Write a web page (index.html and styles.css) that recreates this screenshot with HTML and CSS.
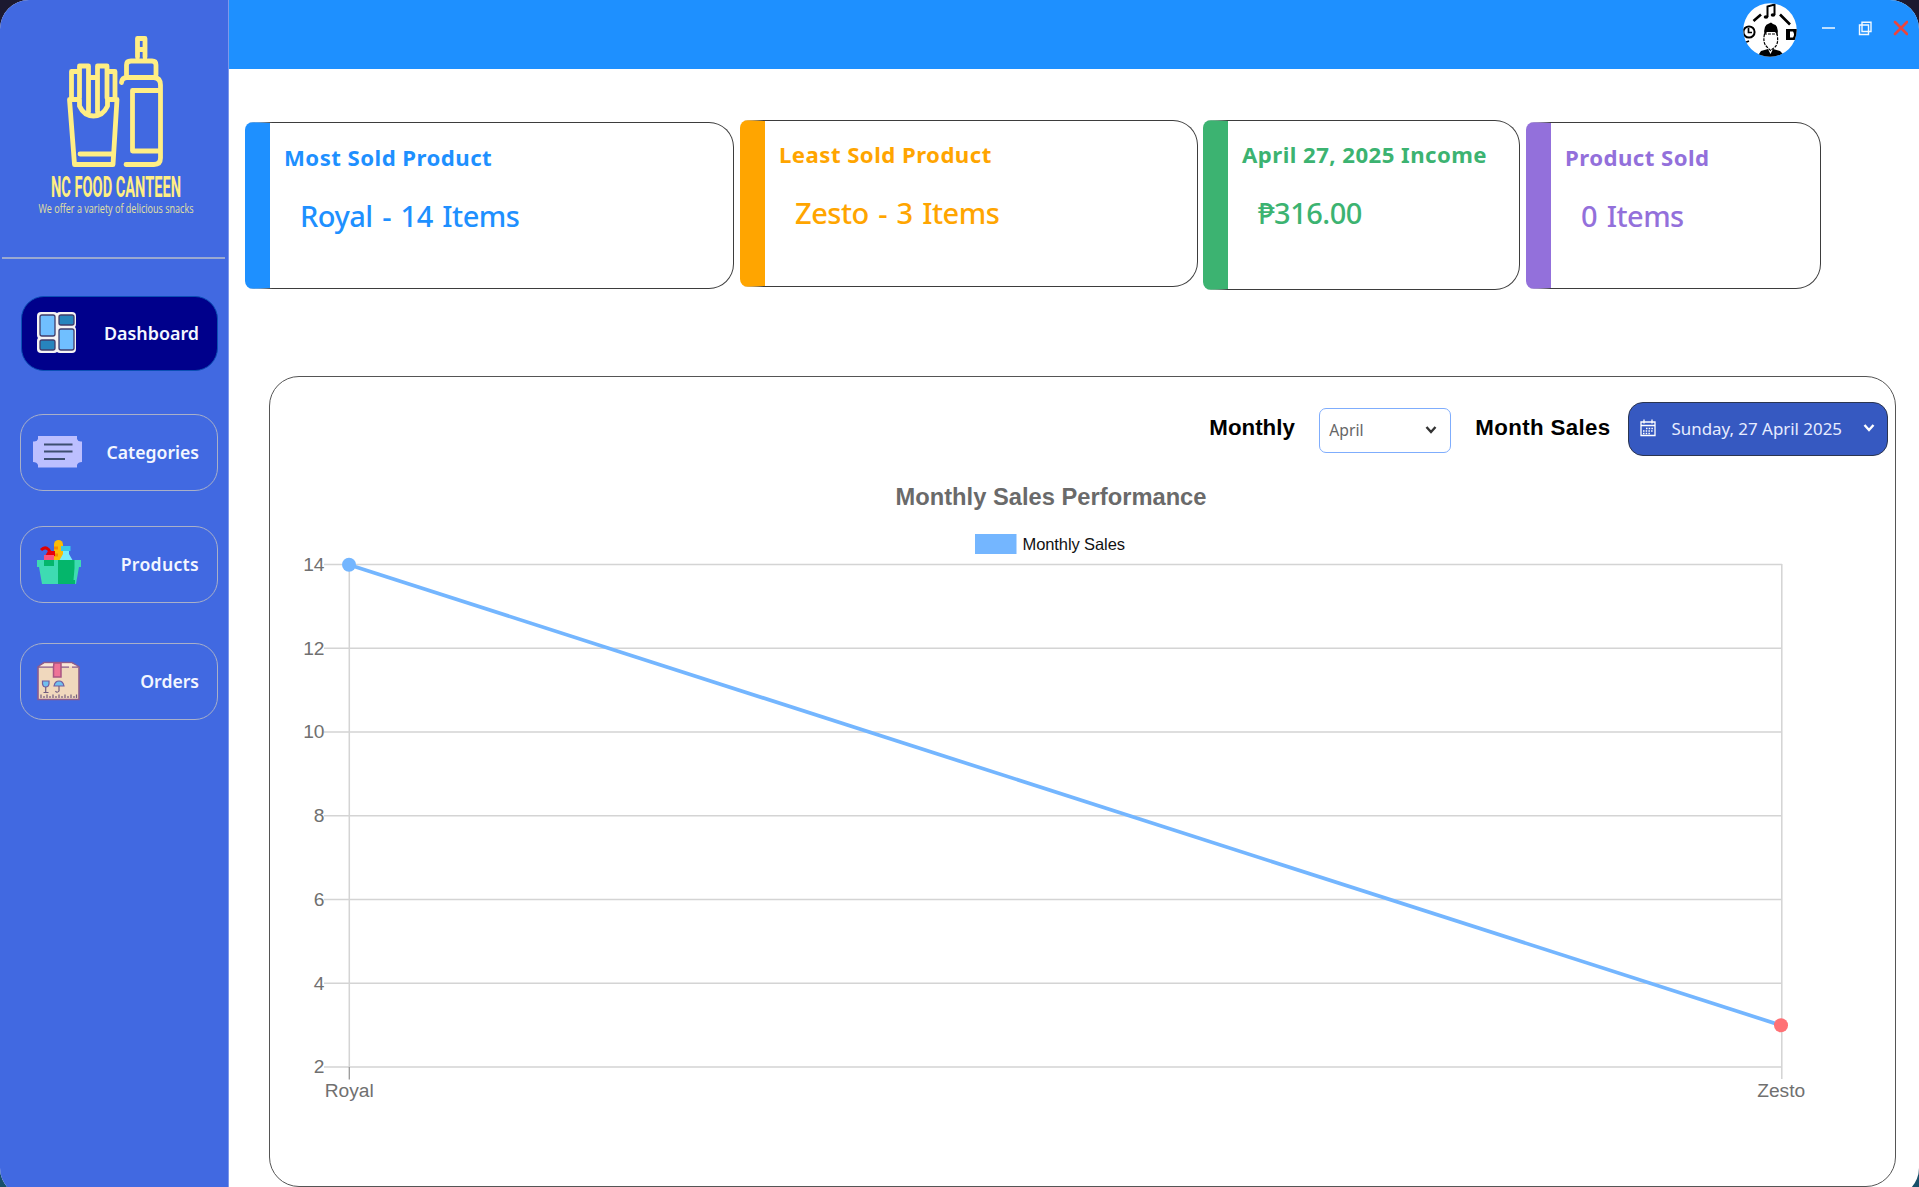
FILE: index.html
```html
<!DOCTYPE html>
<html lang="en">
<head>
<meta charset="utf-8">
<title>NC Food Canteen</title>
<link rel="stylesheet" href="styles.css">
</head>
<body>
<div class="app">
  <aside class="sidebar">
    <svg class="logo" viewBox="0 0 228 257" width="228" height="257" fill="none" stroke="#ffee84" stroke-width="4.8" stroke-linecap="round" stroke-linejoin="round">
      <path d="M69.500 99.500H79.500V106Q84 116 93.500 116Q103 116 107.500 106V99.500H117L113 164.500H74.500ZM71.500 98V71.500H79.500M79.500 98V66H88.500V112M88.500 77.500H97.500M97.500 112V66H107V98M107 71.500H115V98M80 154H111"/>
      <path d="M137.500 57V38.500H145V57M138 49.500H145M126.500 75V65Q126.500 61 131 61H152Q156 61 156 65V75M121.500 82.500Q122 77.500 127 77.500H154Q160.500 78 160.500 85V158Q160.500 164.500 154 164.500H126M160 90.500H132.500V151H160"/>
      <text class="brand" x="51" y="196.500" textLength="130" lengthAdjust="spacingAndGlyphs">NC FOOD CANTEEN</text>
      <text class="tagline" x="38.500" y="213" textLength="155" lengthAdjust="spacingAndGlyphs">We offer a variety of delicious snacks</text>
    </svg>
    <nav class="nav">
      <a class="nav-item active">
        <svg viewBox="0 0 52 42" width="52" height="42"><rect x="3" y="0" width="21" height="27" rx="4" fill="#f4f2f4"/><rect x="22" y="0" width="20" height="16" rx="4" fill="#f4f2f4"/><rect x="3" y="25" width="21" height="16" rx="4" fill="#f4f2f4"/><rect x="22" y="14" width="20" height="27" rx="4" fill="#f4f2f4"/><g stroke="#3f3c6b" stroke-width="1.300"><rect x="6" y="3" width="15" height="21" rx="2" fill="#70bfff"/><rect x="25" y="3" width="15" height="10" rx="2" fill="#2784bd"/><rect x="6" y="28" width="15" height="10" rx="2" fill="#2784bd"/><rect x="25" y="17" width="15" height="21" rx="2" fill="#70bfff"/></g></svg>
        <span>Dashboard</span>
      </a>
      <a class="nav-item">
        <svg viewBox="0 0 52 42" width="52" height="42"><path d="M5 5H44V8Q45 11 49 10.500V31Q45 31 44 34V36.500H5V34Q4 31 0 31V10.500Q4 11 5 8Z" fill="#bcbfff"/><path d="M11 13.500H39.500M11 20.500H39.500M11 28H32" stroke="#3d4e70" stroke-width="2.200"/></svg>
        <span>Categories</span>
      </a>
      <a class="nav-item products">
        <svg viewBox="0 0 52 50" width="52" height="50"><rect x="21" y="3" width="9" height="24" rx="4.500" fill="#fbbb05"/><path d="M21 11H25M21 18H25" stroke="#f58a00" stroke-width="3"/><path d="M8 13Q12 9 15.500 12.500L17 15" fill="none" stroke="#e00000" stroke-width="3"/><path d="M12 19L15 14H22V19Z" fill="#e80008"/><path d="M11 18H21V24H11Z" fill="#fb547c"/><path d="M30 13H36V17L40 24H26L30 17Z" fill="#78eefb"/><path d="M28 9H37.500V14H28Z" fill="#37c9e8"/><path d="M4 23H48V30H46L43 47H9L6 30H4Z" fill="#3edbb2"/><path d="M25 23H41.500V31L40.500 43H42V47H25ZM11 23H21V29H11Z" fill="#04b66b"/></svg>
        <span>Products</span>
      </a>
      <a class="nav-item">
        <svg viewBox="0 0 52 42" width="52" height="42"><path d="M5 7L11 2.500H39L46 7V39.500H5Z" fill="#f0d8bd" stroke="#8b5c8e" stroke-width="1.600"/><path d="M6 6.500L11.500 3.500H38.500L45 6.500Z" fill="#fae6d8"/><path d="M5 7.200H36M39 7.200H45" stroke="#8b5c8e" stroke-width="1.300"/><path d="M21 3H28V17H20.500V7Z" fill="#ee7397" stroke="#a85583" stroke-width="1.500"/><path d="M9.500 21H16V24Q15.500 27 12.700 27Q10 27 9.500 24ZM21 26Q22 21 26 21Q30 21 31 26Z" fill="#70bfef" stroke="#725c9d" stroke-width="1.200"/><path d="M12.700 27V32.500M10.500 32.500H15.500M26 26V31Q24 33.500 22.500 31M8 38V34.500M11 38V36M14 38V34.500M17 38V36M20 38V34.500M23 38V36M26 38V34.500M29 38V36M32 38V34.500M35 38V36M38 38V34.500M41 38V36M43.500 38V34.500" fill="none" stroke="#725c7d" stroke-width="1.200"/></svg>
        <span>Orders</span>
      </a>
    </nav>
  </aside>
  <main class="main">
    <header class="topbar">
      <svg class="avatar" viewBox="0 0 54 54" width="54" height="54">
        <clipPath id="disc"><circle cx="27" cy="27" r="26.700"/></clipPath>
        <g clip-path="url(#disc)"><rect width="54" height="54" fill="#fff"/>
          <path d="M14 54L18 48L25 46L27.500 51L30 46L37 48L43 54Z" fill="#000"/>
          <path d="M21.500 31Q19.500 40 24 44L27.500 47.500L32 44Q36 40 34 31Z" fill="#fff" stroke="#000" stroke-width="1.200" stroke-dasharray="3 1"/>
          <path d="M21.500 32Q20 22 26 20.500L28 19.500L30 21Q36 22 34.500 32L32 29H24Z" fill="#000"/>
          <circle cx="6" cy="29" r="5.600" fill="#fff" stroke="#000" stroke-width="2"/><path d="M5.500 25V29.500H9M1 40L6 38" fill="none" stroke="#000" stroke-width="1.700"/>
          <path d="M10.500 18L18 11.500M37 11.500L47 21.500" stroke="#000" stroke-width="2.600"/>
          <path d="M24.500 14V3.500L31.500 1.500V12" fill="none" stroke="#000" stroke-width="2"/><ellipse cx="23" cy="14" rx="2.300" ry="1.800"/><ellipse cx="30" cy="12" rx="2.300" ry="1.800"/>
          <path d="M43 26H54V37H43Z"/><path d="M47 28.500H50Q52 31.500 50 34.500H47Z" fill="#fff"/>
        </g>
      </svg>
      <svg class="winctl" viewBox="0 0 86 16" width="86" height="16" fill="none" stroke="#f2f9ff" stroke-width="1.400"><path d="M0 8H13M37.500 5V14.500H46.500V5ZM40 11.500V2.300H49V11.500ZM37.500 5H46.500"/><path d="M73 2L85 14M85 2L73 14" stroke="#ec453d" stroke-width="2.600" stroke-linecap="round"/></svg>
    </header>
    <section class="cards">
      <article class="card most"><h2>Most Sold Product</h2><p>Royal - 14 Items</p></article>
      <article class="card least"><h2>Least Sold Product</h2><p>Zesto - 3 Items</p></article>
      <article class="card income"><h2>April 27, 2025 Income</h2><p>₱316.00</p></article>
      <article class="card sold"><h2>Product Sold</h2><p>0 Items</p></article>
    </section>
    <section class="panel">
      <div class="filters">
        <span class="label">Monthly</span>
        <div class="select"><span>April</span><svg viewBox="0 0 12 10" width="12" height="10"><path d="M1.500 2L6 7L10.500 2" fill="none" stroke="#333" stroke-width="2.400"/></svg></div>
        <span class="label sales">Month Sales</span>
        <div class="date">
          <svg viewBox="0 0 16 18" width="16" height="18" fill="none" stroke="#fff" stroke-width="1.300"><path d="M1 3H15V16.500H1ZM1 6.500H15M4 .5V4.500M12 .5V4.500"/><path d="M6 9.500H13M3 12H13M3 14.500H11" stroke-dasharray="1.500 1.200"/></svg>
          <span>Sunday, 27 April 2025</span>
          <svg viewBox="0 0 12 10" width="12" height="10"><path d="M1.500 2L6 7L10.500 2" fill="none" stroke="#fff" stroke-width="2.400"/></svg>
        </div>
      </div>
      <svg class="chart" viewBox="270 460 1625 725" width="1625" height="725">
        <text class="chart-title" x="1051" y="504.500" text-anchor="middle" textLength="311">Monthly Sales Performance</text>
        <rect x="975" y="534" width="41.500" height="20" fill="#74b6ff"/>
        <text class="legend" x="1022.500" y="550" textLength="102.500">Monthly Sales</text>
        <path d="M324 564.500H1782M324 648.300H1782M324 732H1782M324 815.800H1782M324 899.600H1782M324 983.300H1782M324 1067H1782M349.300 564V1067M1781.800 564V1079" stroke="#d4d4d4" stroke-width="1.500"/>
        <path d="M349.300 1067V1079.500" stroke="#999" stroke-width="1.300"/>
        <path d="M349 564.700L1781 1025.300" stroke="#74b6ff" stroke-width="3.700"/>
        <circle cx="349" cy="564.700" r="7" fill="#74b6ff"/><circle cx="1781" cy="1025.300" r="7" fill="#ff7175"/>
        <g class="tick" text-anchor="end"><text x="324.500" y="571">14</text><text x="324.500" y="654.500">12</text><text x="324.500" y="738.300">10</text><text x="324.500" y="822">8</text><text x="324.500" y="905.800">6</text><text x="324.500" y="989.600">4</text><text x="324.500" y="1073.300">2</text></g>
        <g class="tick" text-anchor="middle"><text x="349.200" y="1097">Royal</text><text x="1781.200" y="1097">Zesto</text></g>
      </svg>
    </section>
  </main>
</div>
</body>
</html>
```
FILE: styles.css
```css
* { box-sizing: border-box; }
html, body { height: 1187px; overflow: hidden; }
body {
  margin: 0;
  background: linear-gradient(#1c1930 50%, #17506a 50%);
  font-family: "Noto Sans", sans-serif;
}
.app {
  display: flex;
  width: 1919px;
  height: 1197px;
  border-radius: 29px;
  overflow: hidden;
  background: #fff;
}
.sidebar {
  width: 229px;
  flex: none;
  background: #4169e1;
  border-right: 1px solid #7d98ea;
}
.logo { display: block; overflow: visible; }
.brand { font: 700 29px "Roboto", sans-serif; fill: #ffee84; stroke: none; }
.tagline { font: 500 13px "Open Sans", sans-serif; fill: #e2e0a0; stroke: none; }
.nav {
  margin: 0 3px 0 2px;
  padding: 37px 6px 0 18px;
  border-top: 2px solid #9aa9d0;
}
.nav-item {
  display: flex;
  align-items: center;
  justify-content: space-between;
  width: 198px;
  height: 77px;
  margin-bottom: 35.500px;
  padding: 0 18px 1px 12px;
  border: 1.500px solid #a9b0c8;
  border-radius: 23px;
  color: #f3f6ff;
  font-size: 17.600px;
  font-weight: 600;
}
.nav-item.active {
  width: 197px;
  height: 75px;
  margin: 0 1px 42.500px 1px;
  padding: 0 18px 1px 12px;
  background: #00008b;
  border-color: #0b50b5;
  font-size: 17.900px;
}
.nav-item.products { margin-bottom: 39.500px; letter-spacing: .3px; }
.products svg { margin-top: -5px; }
.main { flex: 1; display: flex; flex-direction: column; }
.topbar {
  display: flex;
  justify-content: flex-end;
  height: 69px;
  padding: 2.500px 11px 0 0;
  background: #1e90ff;
}
.winctl { margin: 17px 0 0 25px; }
.cards {
  display: flex;
  gap: 6px;
  height: 173px;
  margin: 51px 0 0 16px;
}
.card {
  --accent: #1e90ff;
  display: flex;
  flex-direction: column;
  flex: none;
  width: 489px;
  height: 167px;
  padding: 17.500px 0 0 14px;
  border: 1.500px solid #3d3d3d;
  border-left: 25px solid var(--accent);
  border-radius: 8px 25px 25px 8px;
  color: var(--accent);
  white-space: nowrap;
}
.card h2 { margin: 0; font-size: 22.200px; line-height: 34px; font-weight: 700; letter-spacing: .45px; }
.card p { margin: 16.500px 0 0 16px; font-size: 29px; line-height: 50px; font-weight: 500; letter-spacing: -.5px; word-spacing: 2.500px; }
.most, .sold { margin-top: 2px; }
.least { --accent: #ffa500; width: 458px; }
.income { --accent: #3cb371; width: 317px; height: 170px; margin-left: -1px; }
.least, .income { padding-top: 16.500px; }
.sold { --accent: #9370db; width: 295px; }
.panel {
  width: 1627px;
  height: 811px;
  margin: 83px 0 0 40px;
  border: 1.300px solid #555;
  border-radius: 30px;
}
.filters {
  display: flex;
  align-items: center;
  justify-content: flex-end;
  height: 83px;
  padding: 20px 7.500px 0 0;
}
.label { font: 700 22.300px/30px "Liberation Sans", sans-serif; margin-top: -2px; color: #000; }
.label.sales { letter-spacing: .35px; }
.select {
  display: flex;
  align-items: center;
  justify-content: space-between;
  width: 132px;
  height: 45px;
  margin: 3px 24px 0 24.500px;
  padding: 0 13px 1px 9px;
  border: 1.500px solid #7fadfd;
  border-radius: 7px;
  color: #666;
  font-size: 15.700px;
}
.date {
  display: flex;
  align-items: center;
  width: 260px;
  height: 54px;
  margin-left: 17px;
  padding: 0 12px 1px 11px;
  border: 1.500px solid #2b3550;
  border-radius: 15px;
  background: #3659c1;
  color: #e6ecff;
  font-size: 16.900px;
}
.date span { margin: 0 auto 0 16px; white-space: nowrap; }
.chart { display: block; font-family: "Liberation Sans", sans-serif; }
.chart-title { font-size: 23.700px; font-weight: 700; fill: #6a6a6a; }
.legend { font-size: 16.500px; fill: #111; }
.tick { font-size: 19.200px; fill: #707070; }
```
